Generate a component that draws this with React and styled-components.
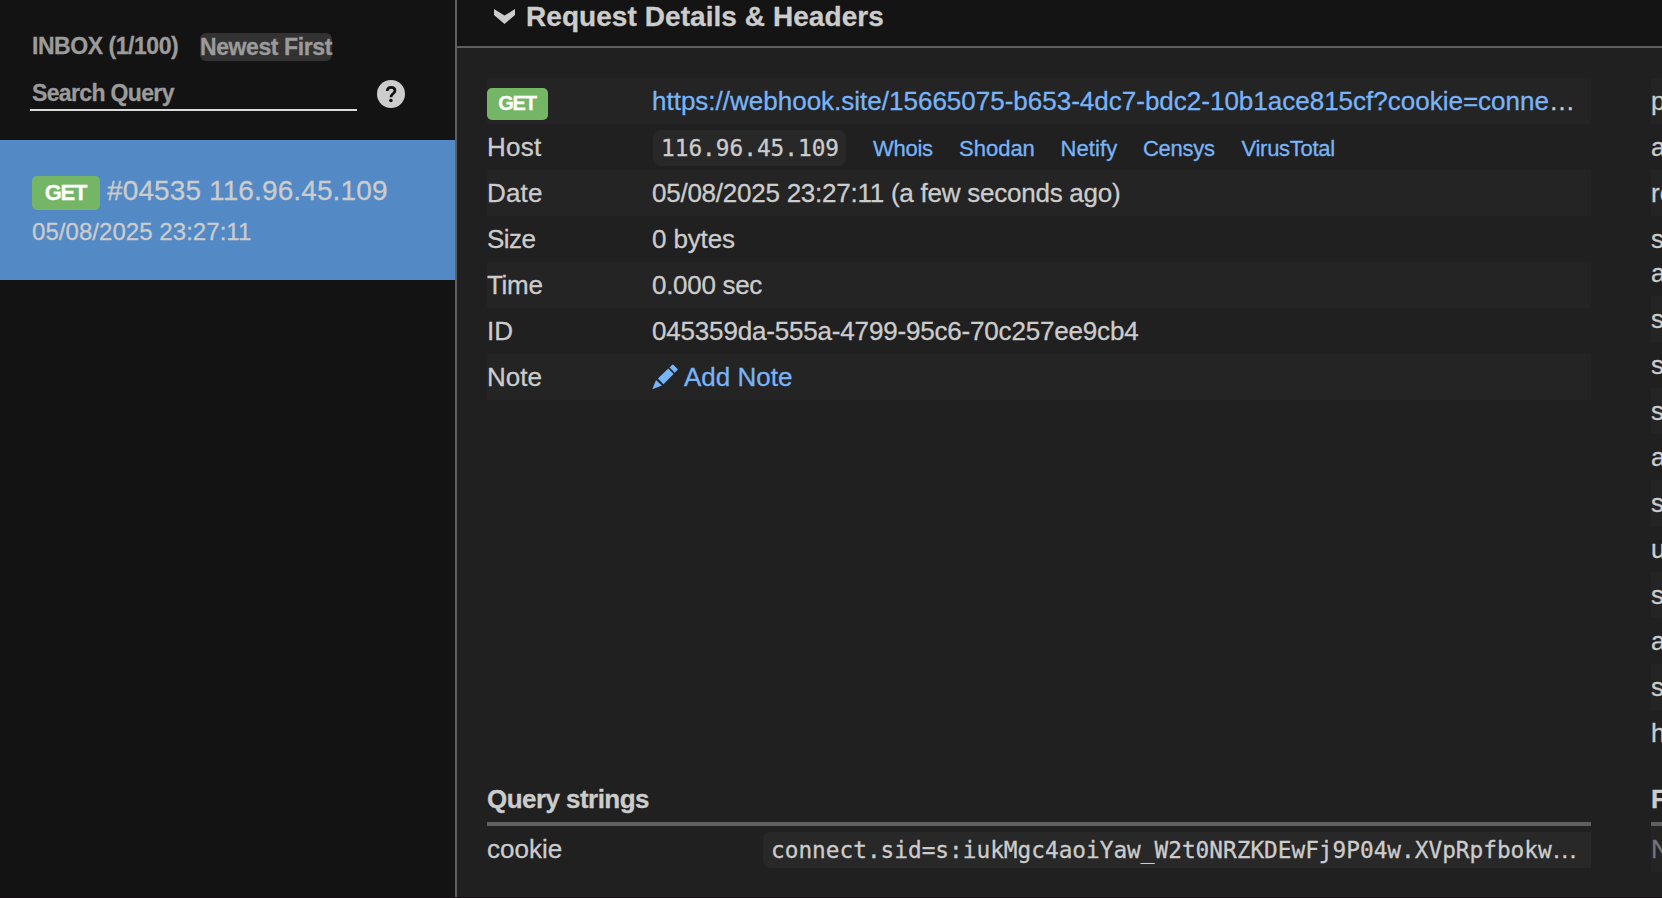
import React from 'react';
import styled, { createGlobalStyle } from 'styled-components';

const Global = createGlobalStyle`
  * { box-sizing: border-box; }
  html, body { margin: 0; padding: 0; overflow: hidden; background: #202020; }
  body {
    font-family: "Liberation Sans", Arial, sans-serif;
    font-size: 26px;
    line-height: 34px;
    color: #cccccc;
    -webkit-text-stroke: 0.3px;
  }
`;

const Page = styled.div`
  display: flex;
  width: 100vw;
  height: 100vh;
  overflow: hidden;
  border-bottom: 1px solid #180f14;
`;

const Label = styled.span`
  letter-spacing: ${(p) => p.$ls || 0}px;
  white-space: nowrap;
`;

const Sidebar = styled.aside`
  flex: 0 0 457px;
  background: #131313;
  border-right: 2px solid #5f5f5f;
  padding-top: 33px;
  white-space: nowrap;
`;

const InboxBar = styled.div`
  display: flex;
  align-items: flex-start;
  height: 46px;
  padding-left: 32px;
  font-size: 23px;
  font-weight: bold;
  line-height: 26px;
  color: #9b9b9b;
`;

const InboxCount = styled.div`
  width: 168px;
  letter-spacing: -0.45px;
`;

const SortButton = styled.div`
  width: 132px;
  height: 28px;
  border-radius: 6px;
  background: #323232;
  line-height: 28px;
  letter-spacing: -0.4px;
`;

const SearchBar = styled.div`
  display: flex;
  gap: 20px;
  height: 61px;
  padding-left: 30px;
`;

const SearchField = styled.div`
  width: 327px;
  height: 32px;
  padding-left: 2px;
  border-bottom: 2px solid #dcdcdc;
  font-size: 23px;
  font-weight: bold;
  line-height: 28px;
  letter-spacing: -0.65px;
  color: #9b9b9b;
`;

const HelpIcon = styled.svg`
  width: 28px;
  height: 28px;
  margin-top: 1px;
`;

const InboxItem = styled.div`
  height: 140px;
  padding: 34px 32px 0;
  background: #5389c5;
`;

const ItemTitle = styled.div`
  display: flex;
  align-items: flex-start;
  gap: 7px;
  height: 41px;
  font-size: 28px;
  letter-spacing: 0.12px;
`;

const ItemDate = styled.div`
  font-size: 24px;
  letter-spacing: 0.05px;
`;

const Badge = styled.span`
  display: block;
  width: ${(p) => (p.$large ? 68 : 61)}px;
  height: ${(p) => (p.$large ? 34 : 32)}px;
  margin-top: ${(p) => (p.$large ? 2 : 4)}px;
  padding-right: 1px;
  border-radius: 5px;
  background: #75b566;
  color: #ffffff;
  font-size: ${(p) => (p.$large ? 22 : 20)}px;
  font-weight: bold;
  line-height: ${(p) => (p.$large ? 33 : 30)}px;
  letter-spacing: -1.2px;
  text-align: center;
`;

const Main = styled.main`
  flex: 1;
  min-width: 0;
  background: #202020;
`;

const Header = styled.header`
  display: flex;
  align-items: flex-start;
  height: 48px;
  padding: 1px 0 0 37px;
  border-bottom: 2px solid #5f5f5f;
  background: #141414;
  font-size: 28px;
  font-weight: bold;
  line-height: 32px;
  letter-spacing: 0.06px;
`;

const Chevron = styled.svg`
  width: 21px;
  height: 15px;
  margin: 8px 11px 0 0;
`;

const Columns = styled.div`
  display: grid;
  grid-template-columns: 1104px 11px;
  column-gap: 60px;
  padding: 30px 0 0 30px;
`;

const Column = styled.div`
  overflow: hidden;
  white-space: nowrap;
`;

const DetailTable = styled.div`
  height: 678px;
  margin-bottom: 20px;
`;

const Row = styled.div`
  display: grid;
  grid-template-columns: ${(p) => p.$label || 165}px 1fr;
  height: ${(p) => (p.$double ? 80 : 46)}px;
  padding: 6px 0;
  background: ${(p) => (p.$stripe ? '#242424' : 'transparent')};
`;

const HeaderRow = styled(Row)`
  display: block;
  color: ${(p) => (p.$muted ? '#747474' : 'inherit')};
`;

const Value = styled.div`
  display: flex;
  align-items: baseline;
  height: 36px;
`;

const Link = styled.a`
  color: #78b4f8;
  letter-spacing: ${(p) => p.$ls || 0}px;
`;

const Lookups = styled.nav`
  display: flex;
  margin-left: 27px;
`;

const Lookup = styled(Link)`
  width: ${(p) => p.$w}px;
  font-size: 22px;
`;

const Code = styled.code`
  flex: 1;
  height: 36px;
  padding-left: 8px;
  border-radius: 8px 0 0 8px;
  background: #282828;
  font-family: "DejaVu Sans Mono", monospace;
  font-size: 22.75px;
  line-height: 36px;
`;

const HostCode = styled(Code)`
  flex: 0 0 193px;
  margin-left: 1px;
  border-radius: 8px;
`;

const Ellipsis = styled.span`
  font-family: "Liberation Sans", Arial, sans-serif;
  font-size: 26px;
  line-height: 1;
`;

const Pencil = styled.svg`
  align-self: flex-start;
  width: 26px;
  height: 26px;
  margin: 4px 6px 0 0;
`;

const SectionTitle = styled.h2`
  height: 50px;
  margin: 0;
  padding-top: 6px;
  border-bottom: 4px solid #5f5f5f;
  font-size: 26px;
  font-weight: bold;
  letter-spacing: -0.55px;
`;

const lookups = [
  ['Whois', 86, -0.28],
  ['Shodan', 101.5, 0],
  ['Netify', 82.5, 0.1],
  ['Censys', 98.5, -0.27],
  ['VirusTotal', 94, -0.28],
];

const headerNames = ['p', 'a', 're', ['s', 'a'], 's', 's', 's', 'a', 's', 'u', 's', 'a', 's', 'h'];

const details = [
  ['Date', 0.18, '05/08/2025 23:27:11 (a few seconds ago)', -0.245],
  ['Size', -0.5, '0 bytes', -0.14],
  ['Time', -0.3, '0.000 sec', -0.3],
  ['ID', 0, '045359da-555a-4799-95c6-70c257ee9cb4', -0.18],
];

export default function App() {
  return (
    <Page>
      <Global />
      <Sidebar>
        <InboxBar>
          <InboxCount>INBOX (1/100)</InboxCount>
          <SortButton>Newest First</SortButton>
        </InboxBar>
        <SearchBar>
          <SearchField>Search Query</SearchField>
          <HelpIcon viewBox="0 0 28 28">
            <circle cx="14" cy="14" r="14" fill="#cccccc" />
            <path
              d="M10.2 11C10.4 8.6 12 7.4 14.1 7.4C16.4 7.4 18 8.8 18 10.7C18 13.4 14 13.6 13.9 17.2"
              fill="none"
              stroke="#131313"
              strokeWidth="2.7"
            />
            <circle cx="13.9" cy="20.5" r="1.8" fill="#131313" />
          </HelpIcon>
        </SearchBar>
        <InboxItem>
          <ItemTitle>
            <Badge $large>GET</Badge>
            <span>#04535 116.96.45.109</span>
          </ItemTitle>
          <ItemDate>05/08/2025 23:27:11</ItemDate>
        </InboxItem>
      </Sidebar>
      <Main>
        <Header>
          <Chevron viewBox="0 0 21 15">
            <path d="M0 0L10.5 6.6L21 0V6L10.5 15L0 6Z" fill="#cccccc" />
          </Chevron>
          Request Details &amp; Headers
        </Header>
        <Columns>
          <Column>
            <DetailTable>
              <Row $stripe>
                <Badge>GET</Badge>
                <Value>
                  <Link>https://webhook.site/15665075-b653-4dc7-bdc2-10b1ace815cf?cookie=conne</Link>
                  <span>…</span>
                </Value>
              </Row>
              <Row>
                <Label $ls={0.25}>Host</Label>
                <Value>
                  <HostCode>116.96.45.109</HostCode>
                  <Lookups>
                    {lookups.map(([name, w, ls]) => (
                      <Lookup key={name} $w={w} $ls={ls}>{name}</Lookup>
                    ))}
                  </Lookups>
                </Value>
              </Row>
              {details.map(([label, labelLs, value, valueLs], i) => (
                <Row key={label} $stripe={i % 2 === 0}>
                  <Label $ls={labelLs}>{label}</Label>
                  <Label $ls={valueLs}>{value}</Label>
                </Row>
              ))}
              <Row $stripe>
                <Label>Note</Label>
                <Value>
                  <Pencil viewBox="0 0 26 26" fill="#78b4f8">
                    <path d="M0.3 25.3L4 16L9.9 21.5Z" />
                    <path d="M5.9 14.6L16.3 4.6L21.6 9.9L11.5 20.2Z" />
                    <path d="M17.5 3.4L20 0.9Q20.8 0.1 21.6 0.9L25.4 4.7Q26.2 5.4 25.4 6.1L22.8 8.7Z" />
                  </Pencil>
                  <Link>Add Note</Link>
                </Value>
              </Row>
            </DetailTable>
            <SectionTitle>Query strings</SectionTitle>
            <Row $label={276}>
              <Label>cookie</Label>
              <Value>
                <Code>
                  connect.sid=s:iukMgc4aoiYaw_W2t0NRZKDEwFj9P04w.XVpRpfbokw<Ellipsis>…</Ellipsis>
                </Code>
              </Value>
            </Row>
          </Column>
          <Column>
            <DetailTable>
              {headerNames.map((name, i) => (
                <HeaderRow key={i} $stripe={i % 2 === 0} $double={Array.isArray(name)}>
                  {Array.isArray(name) ? name.map((part) => <div key={part}>{part}</div>) : name}
                </HeaderRow>
              ))}
            </DetailTable>
            <SectionTitle>F</SectionTitle>
            <HeaderRow $stripe $muted>N</HeaderRow>
          </Column>
        </Columns>
      </Main>
    </Page>
  );
}
